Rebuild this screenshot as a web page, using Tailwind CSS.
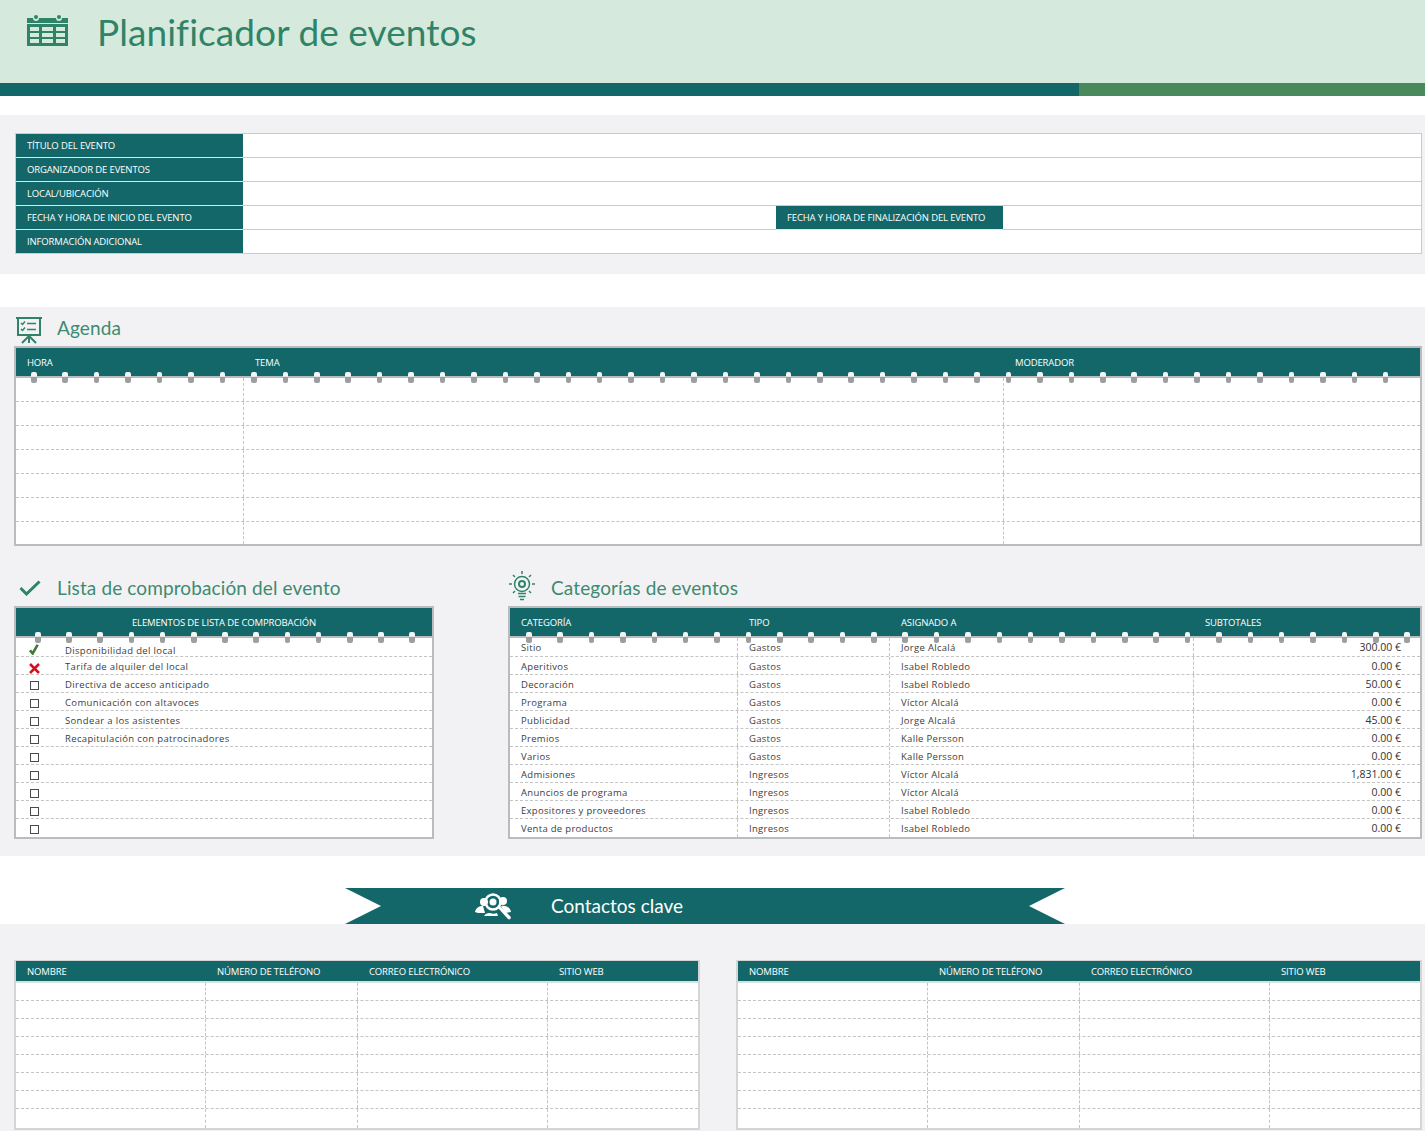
<!DOCTYPE html>
<html lang="es">
<head>
    <meta charset="UTF-8">
    <title>Planificador de eventos</title>
    <script src="https://cdn.jsdelivr.net/npm/@tailwindcss/browser@4"></script>
</head>
<body class="bg-white">
<div class="w-[1425px] h-[1131px] overflow-hidden flex flex-col font-['Open_Sans',sans-serif] text-[#404040]">

    <!-- title band -->
    <header class="h-[83px] bg-[#d5eadd] flex items-start shrink-0">
        <svg class="ml-[27px] mt-[14px] w-[41px] h-[32px]" viewBox="0 0 41 32" fill="#2f8468">
            <path d="M0 4h6a3 3 0 0 0 6 0h17a3 3 0 0 0 6 0h6v5H0z"/>
            <circle cx="9" cy="3" r="2"/><circle cx="32" cy="3" r="2"/>
            <path fill-rule="evenodd" d="M0 10h41v22H0zM3 13v4h9v-4zM15 13v4h11v-4zM29 13v4h9v-4zM3 19v4h9v-4zM15 19v4h11v-4zM29 19v4h9v-4zM3 25v4h9v-4zM15 25v4h11v-4zM29 25v4h9v-4z"/>
        </svg>
        <h1 class="ml-[29px] mt-[7px] font-['Lato',sans-serif] text-[37px] leading-[50px] tracking-[0.07px] text-[#2f8468]">Planificador de eventos</h1>
    </header>
    <div class="h-[13px] flex shrink-0">
        <div class="w-[1079px] bg-[#146768]"></div>
        <div class="flex-1 bg-[#488a5c]"></div>
    </div>
    <div class="h-[19px] shrink-0"></div>

    <!-- event details -->
    <section class="h-[159px] bg-[#f2f2f4] pt-[18px] pl-[15px] shrink-0">
        <div class="w-[1407px] h-[121px] border border-[#c9cccf] bg-white flex flex-col">
            <div class="h-[24px] flex border-b border-[#c9cccf]">
                <div class="w-[227px] bg-[#146768] border-b border-[#d5eadd] -mb-px text-white text-[9.5px] leading-[23px] pl-[11px] tracking-[-0.14px]">TÍTULO DEL EVENTO</div>
            </div>
            <div class="h-[24px] flex border-b border-[#c9cccf]">
                <div class="w-[227px] bg-[#146768] border-b border-[#d5eadd] -mb-px text-white text-[9.5px] leading-[23px] pl-[11px] tracking-[-0.14px]">ORGANIZADOR DE EVENTOS</div>
            </div>
            <div class="h-[24px] flex border-b border-[#c9cccf]">
                <div class="w-[227px] bg-[#146768] border-b border-[#d5eadd] -mb-px text-white text-[9.5px] leading-[23px] pl-[11px] tracking-[-0.14px]">LOCAL/UBICACIÓN</div>
            </div>
            <div class="h-[24px] flex border-b border-[#c9cccf]">
                <div class="w-[227px] bg-[#146768] border-b border-[#d5eadd] -mb-px text-white text-[9.5px] leading-[23px] pl-[11px] tracking-[-0.14px]">FECHA Y HORA DE INICIO DEL EVENTO</div>
                <div class="ml-[533px] w-[227px] bg-[#146768] border-b border-[#d5eadd] -mb-px text-white text-[9.5px] leading-[23px] pl-[11px] tracking-[-0.14px]">FECHA Y HORA DE FINALIZACIÓN DEL EVENTO</div>
            </div>
            <div class="h-[24px] flex">
                <div class="w-[227px] bg-[#146768] text-white text-[9.5px] leading-[23px] pl-[11px] tracking-[-0.14px]">INFORMACIÓN ADICIONAL</div>
            </div>
        </div>
    </section>
    <div class="h-[33px] shrink-0"></div>

    <!-- agenda, checklist, categories -->
    <section class="h-[549px] bg-[#f2f2f4] pl-[14px] shrink-0">
        <div class="h-[39px] flex items-end pb-[5px]">
            <svg class="ml-[1px] w-[28px] h-[28px] -mb-[3px]" viewBox="0 0 28 28" fill="none" stroke="#2f8468" stroke-width="2">
                <path d="M1 2h26M3 2v17h22V2M14 19v8M14 20l-7 7M14 20l7 7"/>
                <path stroke-width="1.5" d="M6 7l1.5 1.5L10 5.5M6 13l1.5 1.5L10 11.500M12 7.500h9M12 13.500h9"/>
            </svg>
            <h2 class="ml-[14px] font-['Lato',sans-serif] text-[19px] leading-[26px] tracking-[0.12px] text-[#3e8a70]">Agenda</h2>
        </div>
        <div id="agenda" class="w-[1408px]"></div>

        <div class="flex mt-[22px]">
            <div class="w-[420px]">
                <div class="h-[38px] flex items-end pb-[5px]">
                    <svg class="ml-[5px] w-[22px] h-[16px] mb-[5px]" viewBox="0 0 22 16" fill="none" stroke="#2f8468" stroke-width="3"><path d="M1.500 8l6 6L20.500 1.500"/></svg>
                    <h2 class="ml-[16px] font-['Lato',sans-serif] text-[19px] leading-[26px] tracking-[0.12px] text-[#3e8a70]">Lista de comprobación del evento</h2>
                </div>
                <div id="checklist"></div>
            </div>
            <div class="ml-[74px] w-[914px]">
                <div class="h-[38px] flex items-end pb-[5px]">
                    <svg class="w-[28px] h-[32px] -mb-[2px]" viewBox="0 0 28 32" fill="none" stroke="#2f8468" stroke-width="1.500">
                        <circle cx="14" cy="13" r="7.500"/><circle cx="14" cy="13" r="3" stroke-width="2"/>
                        <path d="M14 0v3M1 13h3M24 13h3M5 4l2 2M23 4l-2 2M5 22l2-2M23 22l-2-2M10 22.500h8M10.500 25.500h7M12 28.500h4" />
                    </svg>
                    <h2 class="ml-[15px] font-['Lato',sans-serif] text-[19px] leading-[26px] tracking-[0.12px] text-[#3e8a70]">Categorías de eventos</h2>
                </div>
                <div id="categories"></div>
            </div>
        </div>
    </section>

    <!-- contacts banner -->
    <div class="h-[68px] pt-[32px] pl-[345px] shrink-0">
        <div class="relative w-[720px] h-[36px] bg-[#146768] [clip-path:polygon(0_0,100%_0,95%_50%,100%_100%,0_100%,5%_50%)] flex items-center text-white">
            <svg class="ml-[130px] w-[38px] h-[28px]" viewBox="0 0 38 28" fill="#fff">
                <circle cx="9" cy="10" r="4"/><circle cx="28" cy="9" r="4"/>
                <path d="M0 20c1-5 5-6 8-6l2 7H3zM26 14c5-1 9 1 10 6l-6 1z"/>
                <path d="M9 24c1-2 3-3 6-3 2 1 5 1 7 0l1 3z"/>
                <circle cx="18" cy="10" r="7.500" fill="none" stroke="#fff" stroke-width="2.500"/>
                <circle cx="18" cy="10" r="3.500"/>
                <path d="M23 16l2-2 10 10a1.500 1.500 0 0 1-2 3z"/>
            </svg>
            <span class="ml-[38px] font-['Lato',sans-serif] text-[19px]">Contactos clave</span>
        </div>
    </div>

    <!-- contacts -->
    <section class="flex-1 bg-[#f2f2f4] pt-[36px] pl-[14px] flex gap-[36px]">
        <div id="contacts-a" class="w-[686px]"></div>
        <div id="contacts-b" class="w-[686px]"></div>
    </section>
</div>

<script>
    // ring binding along the table headers
    function rings(count, first, step) {
        let html = '';
        for (let i = 0; i < count; i++) {
            html += `<span class="absolute top-[-6px] w-[5.5px] h-[11px] rounded-[2px] bg-gradient-to-b from-[#f4f6f6] from-40% to-[#9c9e9f] to-45%" style="left:${(first + i * step).toFixed(1)}px"></span>`;
        }
        return `<div class="relative h-0 z-10">${html}</div>`;
    }

    function table(id, opts) {
        const head = opts.head.map(h => `<div class="${opts.headCell} text-white text-[9.5px] tracking-[-0.14px]">${h}</div>`).join('');
        let body = '';
        opts.rows.forEach((row, r) => {
            const last = r === opts.rows.length - 1;
            const cells = row.map((c, i) => {
                const edge = i < row.length - 1 ? 'border-r border-dashed border-[#c4c4c4]' : '';
                return `<div class="${edge} ${opts.cellClass ? opts.cellClass[i] : ''} overflow-hidden whitespace-nowrap">${c}</div>`;
            }).join('');
            const h = last ? opts.lastRow : opts.rowClass;
            const first = r === 0 && opts.firstRow ? opts.firstRow : h;
            body += `<div class="grid ${opts.cols} ${first} ${last ? '' : 'border-b border-dashed border-[#c4c4c4]'}">${cells}</div>`;
        });
        document.getElementById(id).innerHTML = `
            <div class="${opts.frame} bg-white">
                <div class="grid ${opts.cols} ${opts.headClass} bg-[#146768]">${head}</div>
                <div class="${opts.rule}"></div>
                ${opts.ringCount ? rings(opts.ringCount, opts.ringFirst, opts.ringStep) : ''}
                ${body}
            </div>`;
    }

    const emptyRows = (n, cols) => Array.from({ length: n }, () => Array(cols).fill(''));

    table('agenda', {
        frame: 'border-2 border-[#b9bcbf]',
        cols: 'grid-cols-[228px_760px_1fr]',
        head: ['HORA', 'TEMA', 'MODERADOR'],
        headCell: 'pl-[11px] pt-[8px]',
        headClass: 'h-[28px]',
        rule: 'h-[2px] bg-[#b9bcbf]',
        rows: emptyRows(7, 3),
        rowClass: 'h-[24px]',
        lastRow: 'h-[22px]',
        ringCount: 44, ringFirst: 15, ringStep: 31.44
    });

    const tick = '<svg class="ml-[13px] mt-[3px] w-[10px] h-[11px]" viewBox="0 0 11 14" preserveAspectRatio="none" fill="none" stroke="#3f7d34" stroke-width="3"><path d="M1 8l3 4L9.500 1"/></svg>';
    const cross = '<svg class="ml-[13px] mt-[6px] w-[11px] h-[11px]" viewBox="0 0 11 11" fill="none" stroke="#d5101c" stroke-width="2.500"><path d="M1 1l9 9M10 1l-9 9"/></svg>';
    const box = '<div class="ml-[14px] mt-[6px] w-[9px] h-[9px] border-[1.5px] border-[#4a4a4a]"></div>';
    const checkItems = ['Disponibilidad del local', 'Tarifa de alquiler del local', 'Directiva de acceso anticipado', 'Comunicación con altavoces', 'Sondear a los asistentes', 'Recapitulación con patrocinadores', '', '', '', '', ''];

    document.getElementById('checklist').innerHTML = `
        <div class="w-[420px] border-2 border-[#b9bcbf] bg-white">
            <div class="h-[28px] bg-[#146768] text-center text-white text-[9.5px] tracking-[-0.14px] pt-[8px]">ELEMENTOS DE LISTA DE COMPROBACIÓN</div>
            <div class="h-[2px] bg-[#b9bcbf]"></div>
            ${rings(13, 19, 31.2)}
            ${checkItems.map((t, i) => `
                <div class="flex ${i === 0 ? 'h-[19px] pt-[3px]' : 'h-[18px]'} ${i < 10 ? 'border-b border-dashed border-[#c4c4c4]' : ''}">
                    <div class="w-[49px]">${i === 0 ? tick : i === 1 ? cross : box}</div>
                    <div class="text-[9.500px] leading-[20px] tracking-[0.35px]">${t}</div>
                </div>`).join('')}
        </div>`;

    const cat = [
        ['Sitio', 'Gastos', 'Jorge Alcalá', '300.00 €'],
        ['Aperitivos', 'Gastos', 'Isabel Robledo', '0.00 €'],
        ['Decoración', 'Gastos', 'Isabel Robledo', '50.00 €'],
        ['Programa', 'Gastos', 'Víctor Alcalá', '0.00 €'],
        ['Publicidad', 'Gastos', 'Jorge Alcalá', '45.00 €'],
        ['Premios', 'Gastos', 'Kalle Persson', '0.00 €'],
        ['Varios', 'Gastos', 'Kalle Persson', '0.00 €'],
        ['Admisiones', 'Ingresos', 'Víctor Alcalá', '1,831.00 €'],
        ['Anuncios de programa', 'Ingresos', 'Víctor Alcalá', '0.00 €'],
        ['Expositores y proveedores', 'Ingresos', 'Isabel Robledo', '0.00 €'],
        ['Venta de productos', 'Ingresos', 'Isabel Robledo', '0.00 €']
    ];
    const catCell = 'pl-[11px] text-[9.500px] leading-[19px] tracking-[0.3px]';
    table('categories', {
        frame: 'border-2 border-[#b9bcbf]',
        cols: 'grid-cols-[228px_152px_304px_1fr]',
        head: ['CATEGORÍA', 'TIPO', 'ASIGNADO A', 'SUBTOTALES'],
        headCell: 'pl-[11px] pt-[8px]',
        headClass: 'h-[28px]',
        rule: 'h-[2px] bg-[#b9bcbf]',
        rows: cat,
        rowClass: 'h-[18px]',
        firstRow: 'h-[19px]',
        lastRow: 'h-[18px]',
        cellClass: [catCell, catCell, catCell, 'pr-[19px] text-right text-[10.5px] leading-[19px] text-[#333]'],
        ringCount: 29, ringFirst: 16, ringStep: 31.37
    });

    ['contacts-a', 'contacts-b'].forEach(id => table(id, {
        frame: 'border-2 border-t-[1px] border-[#d3d5d7]',
        cols: 'grid-cols-[190px_152px_190px_1fr]',
        head: ['NOMBRE', 'NÚMERO DE TELÉFONO', 'CORREO ELECTRÓNICO', 'SITIO WEB'],
        headCell: 'pl-[11px] pt-[4px]',
        headClass: 'h-[20px]',
        rule: 'h-[2px] bg-[#d5e2e2]',
        rows: emptyRows(8, 4),
        rowClass: 'h-[18px]',
        lastRow: 'h-[19px]'
    }));
</script>
</body>
</html>
